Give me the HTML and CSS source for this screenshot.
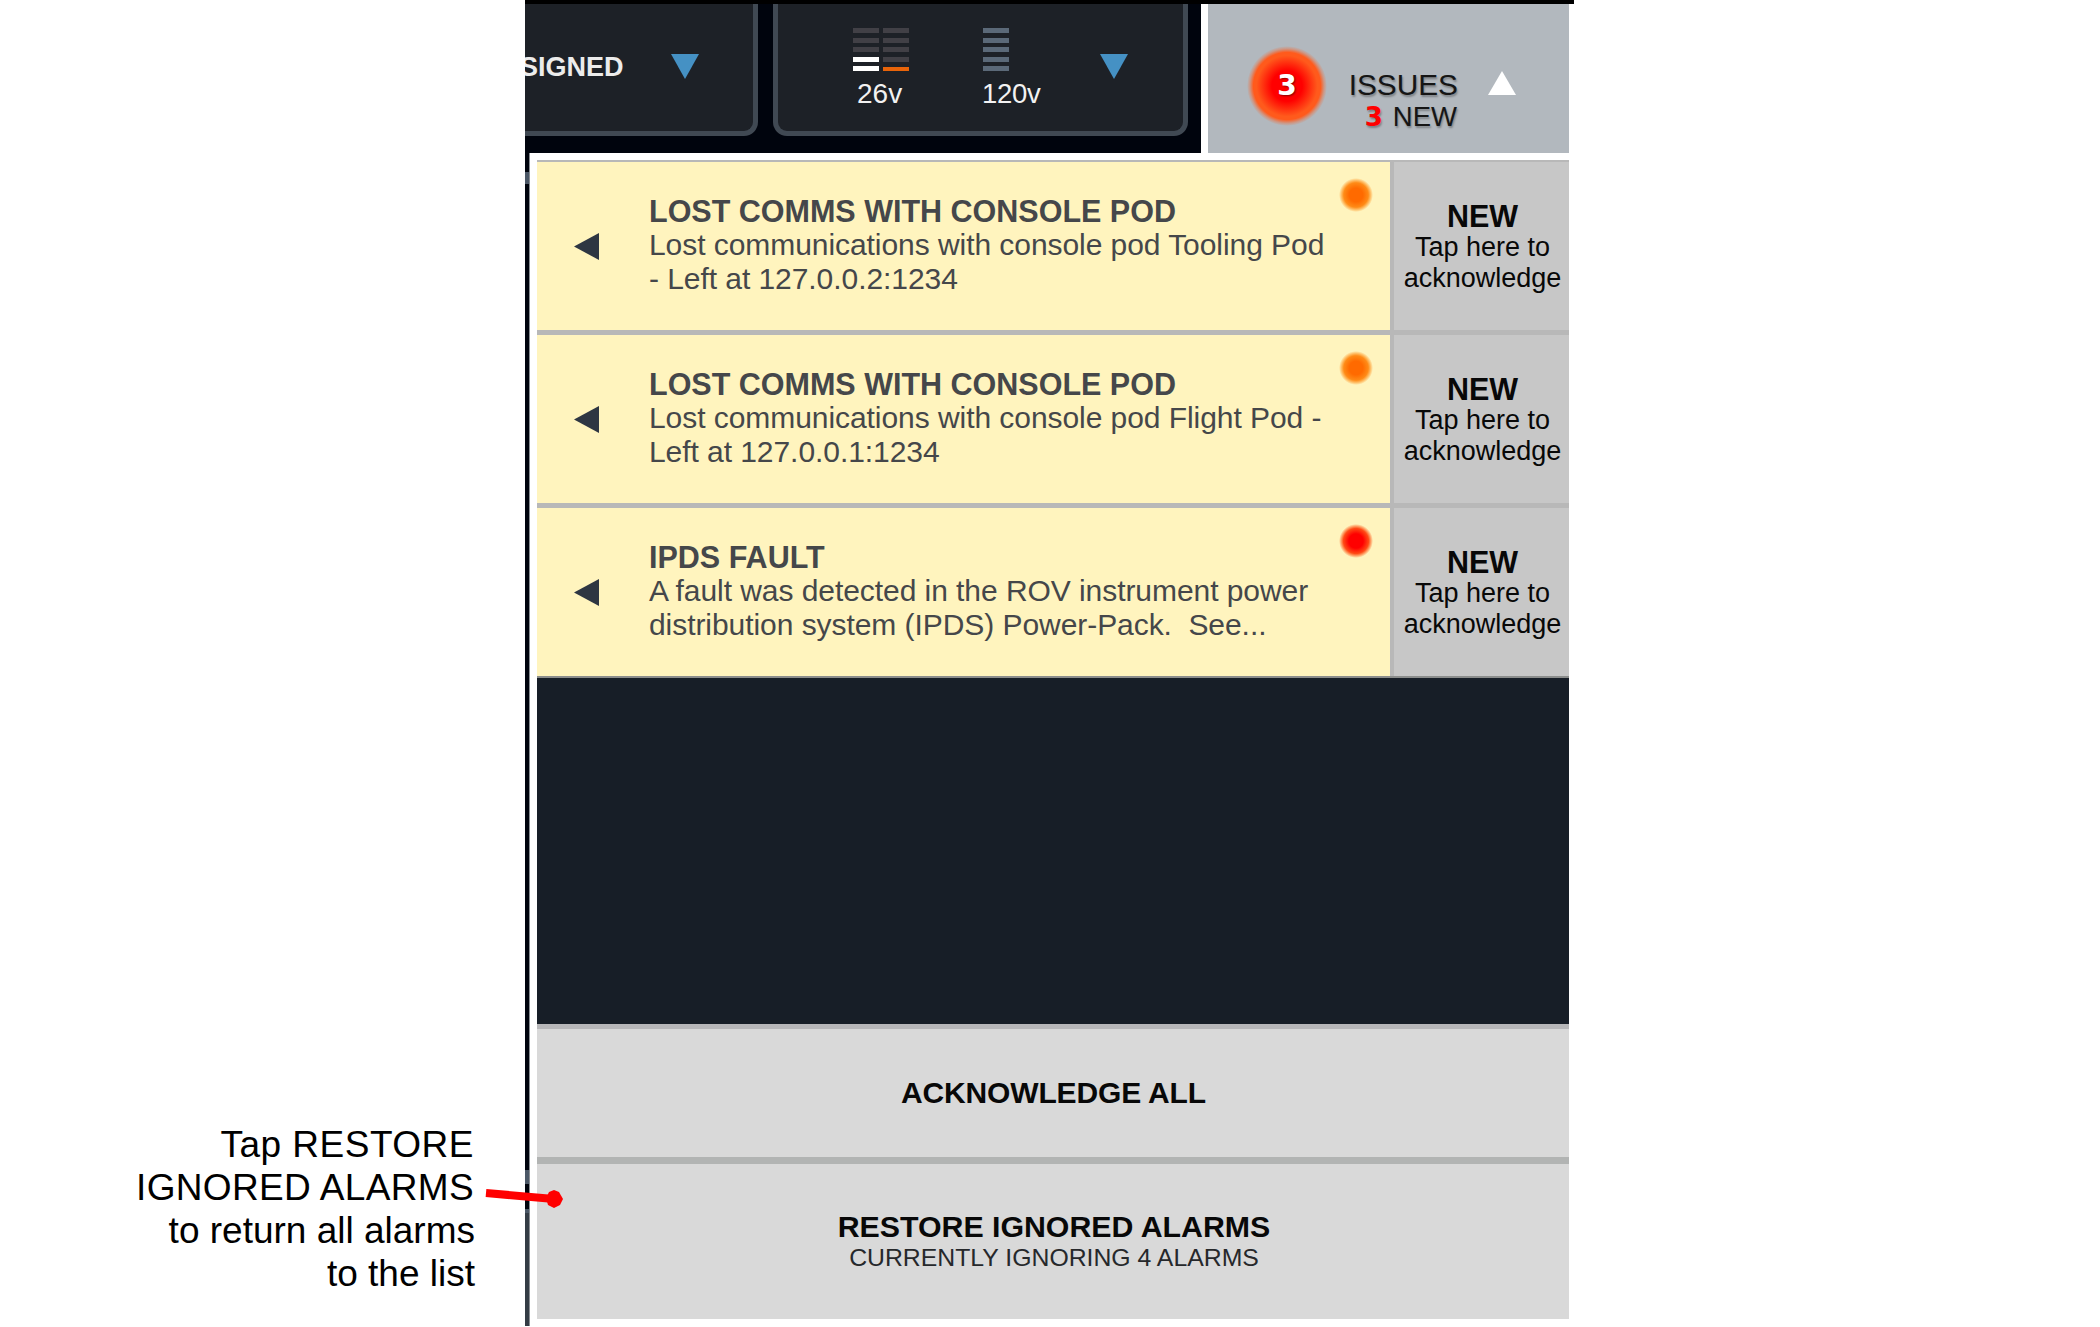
FILE: index.html
```html
<!DOCTYPE html>
<html lang="en">
<head>
<meta charset="utf-8">
<title>Issues list</title>
<link rel="stylesheet" href="styles.css">
</head>
<body>
<main class="page">
  <aside class="note"><span class="wide first">Tap RESTORE</span><br><span class="wide">IGNORED ALARMS</span><br>to return all alarms<br>to the list</aside>
  <section class="screen">
    <div class="top-edge"></div>
    <header class="header">
      <div class="toolbar">
        <div class="panel panel-assigned">
          <span class="assigned">SIGNED</span>
          <svg class="tri" viewBox="0 0 28 25"><path d="M0 0H28L14 25Z" fill="#4591c4"/></svg>
        </div>
        <div class="panel panel-power">
          <div class="meter meter-26">
            <div class="cols">
              <div class="bars"><i></i><i></i><i></i><i class="on"></i><i class="on"></i></div>
              <div class="bars"><i></i><i></i><i></i><i></i><i class="warn"></i></div>
            </div>
            <span class="volt">26v</span>
          </div>
          <div class="meter meter-120">
            <div class="cols"><div class="bars idle"><i></i><i></i><i></i><i></i><i></i></div></div>
            <span class="volt volt-120">120v</span>
          </div>
          <svg class="tri" viewBox="0 0 28 25"><path d="M0 0H28L14 25Z" fill="#4591c4"/></svg>
        </div>
      </div>
      <div class="issues">
        <div class="count">3</div>
        <div class="issues-text">
          <div class="issues-label">ISSUES</div>
          <div class="issues-new"><b>3</b><span>NEW</span></div>
        </div>
        <svg class="tri-up" viewBox="0 0 28 24"><path d="M0 24H28L14 0Z" fill="#fff"/></svg>
      </div>
    </header>
    <div class="body">
      <div class="rail"><i class="r1"></i><i class="r2"></i><i class="r3"></i><i class="r4"></i><i class="r5"></i><i class="r6"></i></div>
      <div class="drawer">
        <article class="row">
          <div class="alarm">
            <svg class="tri-left" viewBox="0 0 25 27"><path d="M25 0V27L0 13.5Z" fill="#2e3642"/></svg>
            <div class="alarm-text"><h2>LOST COMMS WITH CONSOLE POD</h2><p>Lost communications with console pod Tooling Pod<br>- Left at 127.0.0.2:1234</p></div>
            <span class="dot"></span>
          </div>
          <button class="ack"><b>NEW</b><span>Tap here to<br>acknowledge</span></button>
        </article>
        <article class="row">
          <div class="alarm">
            <svg class="tri-left" viewBox="0 0 25 27"><path d="M25 0V27L0 13.5Z" fill="#2e3642"/></svg>
            <div class="alarm-text"><h2>LOST COMMS WITH CONSOLE POD</h2><p>Lost communications with console pod Flight Pod -<br>Left at 127.0.0.1:1234</p></div>
            <span class="dot"></span>
          </div>
          <button class="ack"><b>NEW</b><span>Tap here to<br>acknowledge</span></button>
        </article>
        <article class="row">
          <div class="alarm">
            <svg class="tri-left" viewBox="0 0 25 27"><path d="M25 0V27L0 13.5Z" fill="#2e3642"/></svg>
            <div class="alarm-text"><h2>IPDS FAULT</h2><p>A fault was detected in the ROV instrument power<br>distribution system (IPDS) Power-Pack.&nbsp; See...</p></div>
            <span class="dot red"></span>
          </div>
          <button class="ack"><b>NEW</b><span>Tap here to<br>acknowledge</span></button>
        </article>
        <div class="empty"></div>
        <button class="action all">ACKNOWLEDGE ALL</button>
        <button class="action restore"><b>RESTORE IGNORED ALARMS</b><span>CURRENTLY IGNORING 4 ALARMS</span></button>
      </div>
    </div>
  </section>
  <svg class="pointer" viewBox="0 0 80 24"><path d="M1 8L69 14" stroke="#f00" stroke-width="8"/><path d="M69 5L74 7L78 14L75 20L69 23L63 20L61 13L64 7Z" fill="#f00"/></svg>
</main>
</body>
</html>
```
FILE: styles.css
```css
* { box-sizing: border-box; }
body { margin: 0; background: #fff; font-family: "Liberation Sans", Arial, sans-serif; }
button { border: 0; margin: 0; padding: 0; font-family: inherit; color: #080808; }
h2, p { margin: 0; }
i { display: block; }
svg { display: block; flex: none; }

.page { position: relative; display: flex; width: 2100px; height: 1327px; overflow: hidden; }
.note { width: 525px; padding: 1123px 50px 0 0; text-align: right; font-size: 37px; line-height: 43px; white-space: nowrap; color: #000; }
.wide { letter-spacing: .35px; margin-right: 1px; }
.first { letter-spacing: .5px; }
.screen { width: 1049px; height: 1327px; display: flex; flex-direction: column; }
.top-edge { height: 4px; background: #000; }

.header { display: flex; gap: 7px; height: 149px; }
.toolbar { display: flex; gap: 15px; width: 676px; background: #00040d; padding-bottom: 17px; overflow: hidden; }
.panel { display: flex; height: 132px; background: #1d2127; border: 5px solid #404953; border-top: 0; }
.panel-assigned { width: 233px; border-left: 0; border-bottom-right-radius: 14px; }
.assigned { width: 146px; margin-left: -5px; padding-top: 48px; font-size: 27px; line-height: 30px; font-weight: bold; color: #ececec; flex: none; }
.tri { width: 28px; height: 25px; margin-top: 50px; }
.panel-assigned .tri { margin-left: 5px; }
.panel-power { width: 415px; border-radius: 0 0 14px 14px; padding-left: 75px; }
.meter { padding-top: 24px; color: #f2f2f2; }
.meter-26 { width: 130px; }
.meter-120 { width: 117px; }
.cols { display: flex; gap: 4px; height: 45px; }
.bars { display: flex; flex-direction: column; gap: 4.6px; width: 26px; }
.bars i { height: 5px; background: #414046; }
.bars .on { background: #fff; }
.bars .warn { height: 4px; margin-top: 1px; background: #e8640a; }
.idle i { background: #5b6978; }
.volt { display: block; margin-left: 4px; font-size: 28px; line-height: 30px; padding-top: 6px; }
.volt-120 { margin-left: -1px; font-size: 27.5px; letter-spacing: -.3px; }

.issues { display: flex; width: 361px; background: #b2b8be; padding-left: 39px; color: #151515; }
.count { width: 80px; height: 80px; margin-top: 42px; border-radius: 50%; text-align: center; font: bold 28px/79px "DejaVu Sans", sans-serif; color: #fff; text-shadow: 1px 1px 2px #800; background: radial-gradient(circle closest-side, #f00 0, #f00 38%, #ff5a1c 76%, #ff5a1c 84%, rgba(255, 90, 28, .35) 93%, rgba(255, 90, 28, 0) 100%); }
.issues-text { width: 131px; padding-top: 64px; text-align: right; text-shadow: 1px 2px 2px rgba(0, 0, 0, .3); }
.issues-label { font-size: 29.8px; line-height: 33px; }
.issues-new { display: flex; justify-content: flex-end; align-items: baseline; gap: 10px; font-size: 27.5px; line-height: 31px; margin-right: 1px; }
.issues-new b { font: bold 26px/31px "DejaVu Sans", sans-serif; color: #f00; }
.tri-up { width: 28px; height: 24px; margin: 67px 0 0 30px; }

.body { display: flex; height: 1174px; }
.rail { width: 5px; height: 1173px; background: #00040d; border-right: 1px solid #888c91; }
.r1 { height: 19px; }
.r2 { height: 12px; background: #4b5766; }
.r3 { height: 986px; }
.r4 { height: 14px; background: #4b5766; }
.r5 { height: 25px; }
.r6 { height: 117px; background: #343c45; border-top: 4px solid #4b5766; }
.drawer { width: 1039px; padding: 7px 0 0 7px; }

.row { display: flex; height: 173px; border-top: 5px solid #b8b8b8; background: #b8b8b8; gap: 4px; }
.row:first-child { height: 170px; border-top-width: 2px; }
.alarm { position: relative; display: flex; width: 853px; height: 168px; background: #fff4be; }
.tri-left { width: 25px; height: 27px; margin: 71px 0 0 37px; }
.alarm-text { padding: 32px 0 0 50px; color: #45474a; white-space: nowrap; }
.alarm-text h2 { font-size: 30.5px; line-height: 34px; }
.alarm-text p { font-size: 30px; line-height: 34px; letter-spacing: -.06px; }
.dot { position: absolute; right: 17px; top: 16px; width: 34px; height: 34px; border-radius: 50%; background: radial-gradient(circle closest-side, #ff6a00 0, #ff6a00 40%, #ff8b17 72%, rgba(255, 145, 30, .55) 86%, rgba(255, 150, 30, 0) 100%); }
.dot.red { background: radial-gradient(circle closest-side, #f00 0, #f00 42%, #ff4a15 74%, rgba(255, 90, 28, .55) 87%, rgba(255, 90, 28, 0) 100%); }
.ack { display: flex; flex-direction: column; align-items: center; width: 175px; height: 168px; padding: 37px 0 0 2px; background: #c7c7c7; white-space: nowrap; }
.ack b { font-size: 30.5px; line-height: 34px; }
.ack span { font-size: 27px; line-height: 31px; margin-top: -1px; }

.empty { height: 348px; border-top: 2px solid #8b8d8c; background: #171e27; }
.action { display: flex; flex-direction: column; align-items: center; width: 1032px; background: #d9d9d9; }
.all { height: 133px; padding: 47px 0 0 1px; border-top: 5px solid #b7b7b9; font-size: 30px; line-height: 34px; font-weight: bold; letter-spacing: -.15px; }
.restore { height: 162px; padding: 46px 0 0 2px; border-top: 7px solid #b2b4b3; }
.restore b { font-size: 30.3px; line-height: 34px; }
.restore span { font-size: 24.8px; line-height: 28px; color: #26282b; }

.pointer { position: absolute; left: 485px; top: 1185px; width: 80px; height: 24px; }
```
